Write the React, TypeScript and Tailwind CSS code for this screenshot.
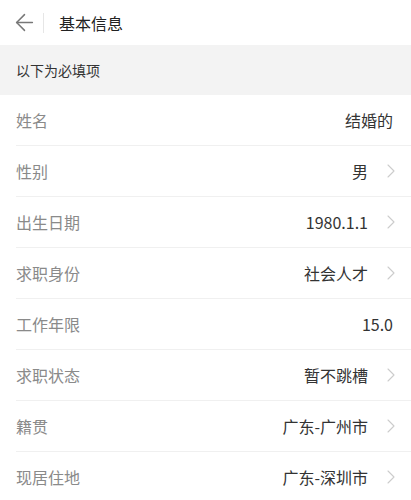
import { ArrowLeft, ChevronRight } from "lucide-react";

const rows: { label: string; value: string; arrow: boolean }[] = [
  { label: "姓名", value: "结婚的", arrow: false },
  { label: "性别", value: "男", arrow: true },
  { label: "出生日期", value: "1980.1.1", arrow: true },
  { label: "求职身份", value: "社会人才", arrow: true },
  { label: "工作年限", value: "15.0", arrow: false },
  { label: "求职状态", value: "暂不跳槽", arrow: true },
  { label: "籍贯", value: "广东-广州市", arrow: true },
  { label: "现居住地", value: "广东-深圳市", arrow: true },
];

export default function App() {
  return (
    <div className="min-h-screen bg-white font-['Noto_Sans_CJK_SC','Noto_Sans',sans-serif]">
      <header className="flex h-[45px] items-center pl-[11px]">
        <ArrowLeft className="h-[27px] w-[27px] text-[#777]" strokeWidth={1.3} />
        <div className="ml-[5px] h-[20px] w-px bg-[#e6e6e6]" />
        <h1 className="ml-[15px] text-[16px] text-[#222]">基本信息</h1>
      </header>
      <div className="flex h-[50px] items-center bg-[#f3f3f3] px-4 text-[14px] text-[#333]">
        以下为必填项
      </div>
      <ul className="pl-4">
        {rows.map((r) => (
          <li
            key={r.label}
            className="flex h-[51px] items-center border-b border-[#f0f0f0] pr-[18px]"
          >
            <span className="flex-1 text-[16px] text-[#8a8a8a]">{r.label}</span>
            <span className="text-[16px] text-[#333]">{r.value}</span>
            {r.arrow && (
              <ChevronRight
                className="-mr-[10px] ml-[11px] h-6 w-6 text-[#cccccc]"
                strokeWidth={1.1}
              />
            )}
          </li>
        ))}
      </ul>
    </div>
  );
}
